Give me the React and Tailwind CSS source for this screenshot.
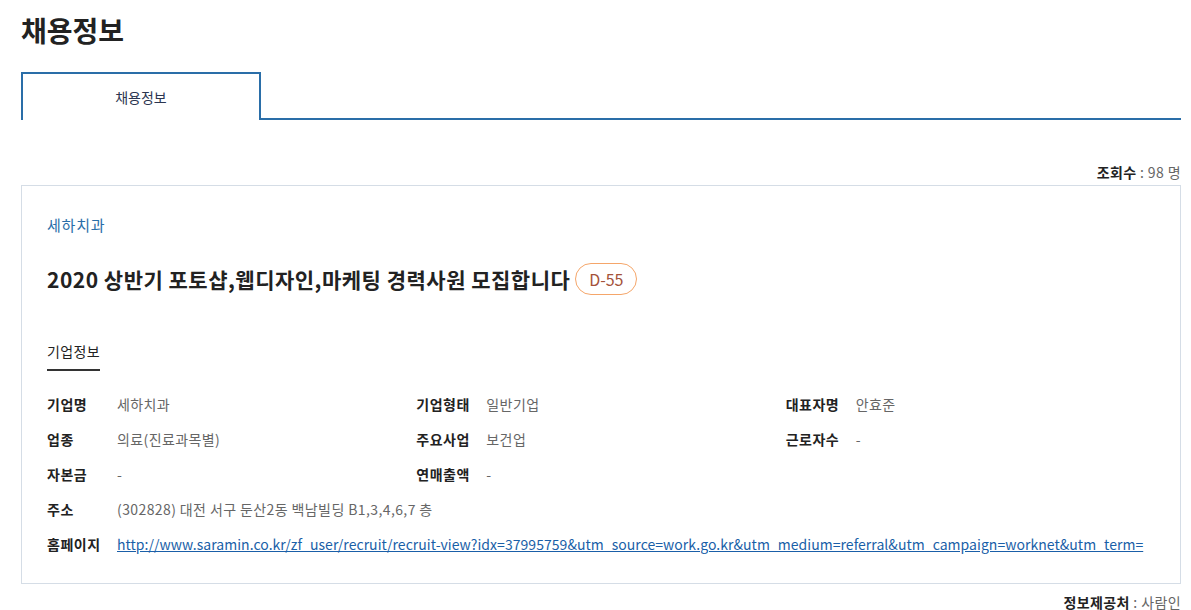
import React from "react";

const font = { fontFamily: '"Noto Sans CJK KR", "Noto Sans", sans-serif' };

const rows = [
  [
    ["기업명", "세하치과"],
    ["기업형태", "일반기업"],
    ["대표자명", "안효준"],
  ],
  [
    ["업종", "의료(진료과목별)"],
    ["주요사업", "보건업"],
    ["근로자수", "-"],
  ],
  [
    ["자본금", "-"],
    ["연매출액", "-"],
  ],
];

const Field = ({ label, value }) => (
  <div className="flex items-center">
    <span className="w-[70px] shrink-0 font-bold tracking-[0.5px] text-[#222]">{label}</span>
    <span className="tracking-[0.4px] text-[#666]">{value}</span>
  </div>
);

const App = () => {
  return (
    <div className="w-[1191px] bg-white pl-[21px] pr-[10px] text-[14px]" style={font}>
      <h1 className="pt-[10px] text-[28px] font-bold leading-[40px] text-[#222]">채용정보</h1>

      <div className="mt-[22px] flex h-[48px]">
        <div className="flex w-[240px] items-center justify-center border-2 border-b-0 border-[#2a6ea8] text-[14px] text-[#2b3550]">
          채용정보
        </div>
        <div className="flex-1 border-b-2 border-[#2a6ea8]" />
      </div>

      <div className="mt-[42px] text-right text-[14px] leading-[20px] tracking-[0.4px] text-[#666]">
        <span className="font-bold text-[#222]">조회수</span> : 98 명
      </div>

      <div className="mt-[3px] border border-[#d5dde6] px-[25px] pt-[26px] pb-[28px]">
        <div className="text-[15px] leading-[26px] tracking-[0.8px] text-[#2a6ea8]">세하치과</div>

        <div className="mt-[25px] flex items-center gap-[5px]">
          <h2 className="text-[21px] font-bold leading-[32px] tracking-[0.5px] text-[#222]">
            2020 상반기 포토샵,웹디자인,마케팅 경력사원 모집합니다
          </h2>
          <span className="flex h-[32px] w-[62px] items-center justify-center rounded-full border border-[#f5a66a] text-[16px] text-[#a4523a]">
            D-55
          </span>
        </div>

        <div className="mt-[45px] inline-block border-b-2 border-[#333] pb-[7px] text-[14px] leading-[22px] tracking-[0.4px] text-[#222]">
          기업정보
        </div>

        <div className="mt-[22px] flex flex-col gap-[13px] leading-[22px]">
          {rows.map((row, i) => (
            <div key={i} className="grid grid-cols-3">
              {row.map(([l, v]) => (
                <Field key={l} label={l} value={v} />
              ))}
            </div>
          ))}
          <Field label="주소" value="(302828) 대전 서구 둔산2동 백남빌딩 B1,3,4,6,7 층" />
          <div className="flex items-center">
            <span className="w-[70px] shrink-0 font-bold tracking-[0.5px] text-[#222]">홈페이지</span>
            <a href="#" className="whitespace-nowrap tracking-[0.04px] text-[#1a5fa8] underline">
              http://www.saramin.co.kr/zf_user/recruit/recruit-view?idx=37995759&amp;utm_source=work.go.kr&amp;utm_medium=referral&amp;utm_campaign=worknet&amp;utm_term=
            </a>
          </div>
        </div>
      </div>

      <div className="mt-[8px] text-right text-[14px] leading-[20px] tracking-[0.4px] text-[#666]">
        <span className="font-bold text-[#222]">정보제공처</span> : 사람인
      </div>
    </div>
  );
};

export default App;
